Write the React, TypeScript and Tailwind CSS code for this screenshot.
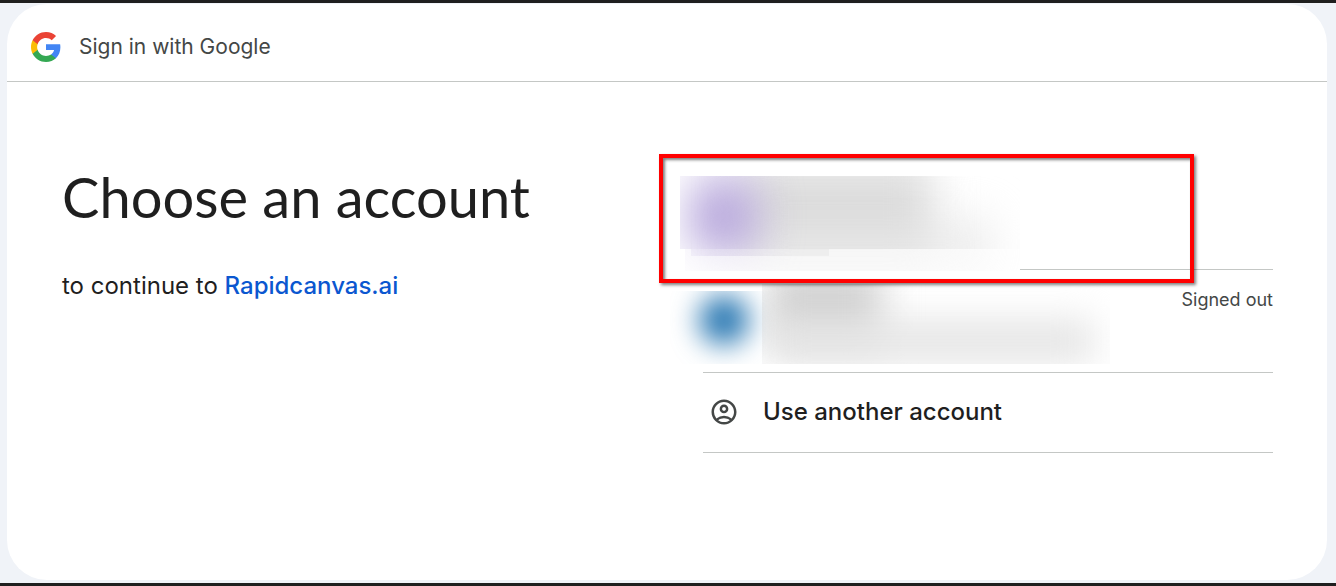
import { MdOutlineAccountCircle } from "react-icons/md";

function GoogleLogo() {
  return (
    <svg viewBox="1 1 22 22" className="size-[30px] shrink-0" aria-hidden="true">
      <path
        fill="#4285F4"
        d="M22.56 12.25c0-.78-.07-1.53-.2-2.25H12v4.26h5.92c-.26 1.37-1.04 2.53-2.21 3.31v2.77h3.57c2.08-1.92 3.28-4.74 3.28-8.09z"
      />
      <path
        fill="#34A853"
        d="M12 23c2.97 0 5.46-.98 7.28-2.66l-3.57-2.77c-.98.66-2.23 1.06-3.71 1.06-2.86 0-5.29-1.93-6.16-4.53H2.18v2.84C3.99 20.53 7.7 23 12 23z"
      />
      <path
        fill="#FBBC05"
        d="M5.84 14.09c-.22-.66-.35-1.36-.35-2.09s.13-1.43.35-2.09V7.07H2.18C1.43 8.55 1 10.22 1 12s.43 3.45 1.18 4.93l2.85-2.22.81-.62z"
      />
      <path
        fill="#EA4335"
        d="M12 5.38c1.62 0 3.06.56 4.21 1.64l3.15-3.15C17.45 2.09 14.97 1 12 1 7.7 1 3.99 3.47 2.18 7.07l3.66 2.84c.87-2.6 3.3-4.53 6.16-4.53z"
      />
    </svg>
  );
}

function FirstAccount() {
  return (
    <svg
      viewBox="0 0 340 104"
      className="absolute top-0 -left-[23px] h-[104px] w-[340px]"
      aria-hidden="true"
    >
      <defs>
        <filter id="soft1" x="-100%" y="-150%" width="300%" height="400%" colorInterpolationFilters="sRGB">
          <feGaussianBlur stdDeviation="20 26" />
        </filter>
        <clipPath id="main1">
          <rect x="0" y="9" width="340" height="73" />
        </clipPath>
        <clipPath id="step1">
          <rect x="11" y="82" width="138" height="7" />
        </clipPath>
        <clipPath id="tail1">
          <rect x="5" y="82" width="335" height="22" />
        </clipPath>
        <g id="shapes1">
          <rect x="60" y="-4" width="192" height="92" fill="#dadada" filter="url(#soft1)" />
          <rect x="60" y="62" width="254" height="36" fill="#e3e3e3" filter="url(#soft1)" />
          <circle cx="43" cy="49" r="39" fill="#b3a2da" filter="url(#soft1)" />
        </g>
      </defs>
      <rect y="9" width="340" height="95" fill="#fff" />
      <use href="#shapes1" clipPath="url(#main1)" />
      <use href="#shapes1" clipPath="url(#tail1)" opacity="0.35" />
      <use href="#shapes1" clipPath="url(#step1)" opacity="0.5" />
    </svg>
  );
}

function SecondAccount() {
  return (
    <svg
      viewBox="0 0 440 80"
      className="absolute top-[14px] -left-[33px] h-20 w-[440px]"
      aria-hidden="true"
    >
      <defs>
        <filter id="soft2" x="-100%" y="-150%" width="300%" height="400%" colorInterpolationFilters="sRGB">
          <feGaussianBlur stdDeviation="14" />
        </filter>
        <filter id="soft3" x="-100%" y="-150%" width="300%" height="400%" colorInterpolationFilters="sRGB">
          <feGaussianBlur stdDeviation="18" />
        </filter>
        <clipPath id="avatar2">
          <rect x="0" y="7" width="440" height="73" />
        </clipPath>
        <clipPath id="name2">
          <rect x="92" y="0" width="348" height="80" />
        </clipPath>
      </defs>
      <g clipPath="url(#avatar2)">
        <circle cx="54" cy="36" r="25" fill="#2877b2" filter="url(#soft2)" />
      </g>
      <g clipPath="url(#name2)">
        <rect x="98" y="-16" width="114" height="76" fill="#d2d2d2" filter="url(#soft3)" />
        <rect x="98" y="36" width="326" height="42" fill="#e4e4e4" filter="url(#soft3)" />
      </g>
    </svg>
  );
}

export default function App() {
  return (
    <div className="flex min-h-screen flex-col border-y-3 border-[#1f1f1f] bg-[#f0f3f8] pt-px pr-[9px] pb-[3px] pl-[7px] font-['Inter','Liberation_Sans',sans-serif] text-[#1f1f1f]">
      <div className="flex-1 rounded-[40px] bg-white">
        <header className="flex h-[78px] items-center gap-[18px] border-b border-[#c4c7c5] px-6 pt-2">
          <GoogleLogo />
          <p className="text-[21px] text-[#444746]">Sign in with Google</p>
        </header>

        <main className="grid grid-cols-2 gap-[71px] pt-[85px] pr-[54px] pb-10 pl-[55px]">
          <section>
            <h1 className="font-['Lato','Liberation_Sans',sans-serif] text-[56px] leading-[60px]">
              Choose an account
            </h1>
            <p className="mt-[43px] text-2xl">
              to continue to{" "}
              <a href="#" className="font-medium text-[#0b57d0]">
                Rapidcanvas.ai
              </a>
            </p>
          </section>

          <ul className="relative">
            <li className="border-b border-[#c4c7c5]">
              <button type="button" aria-label="First account" className="relative block h-[102px] w-full">
                <FirstAccount />
              </button>
            </li>
            <li className="border-b border-[#c4c7c5]">
              <button
                type="button"
                className="relative flex h-[102px] w-full items-start justify-end pt-4 text-lg text-[#444746]"
              >
                <SecondAccount />
                Signed out
              </button>
            </li>
            <li className="border-b border-[#c4c7c5]">
              <button
                type="button"
                className="flex h-[79px] w-full items-center gap-6 pb-0.5 pl-[6px] text-2xl font-medium"
              >
                <MdOutlineAccountCircle className="size-[30px] text-[#444746]" aria-hidden="true" />
                Use another account
              </button>
            </li>
            <li
              aria-hidden="true"
              className="pointer-events-none absolute -top-[13px] right-[79px] -left-[44px] h-[129px] border-4 border-[#ff0000] shadow-[2px_2px_3px_rgba(0,0,0,0.5),inset_2px_2px_3px_rgba(0,0,0,0.5)]"
            />
          </ul>
        </main>
      </div>
    </div>
  );
}
